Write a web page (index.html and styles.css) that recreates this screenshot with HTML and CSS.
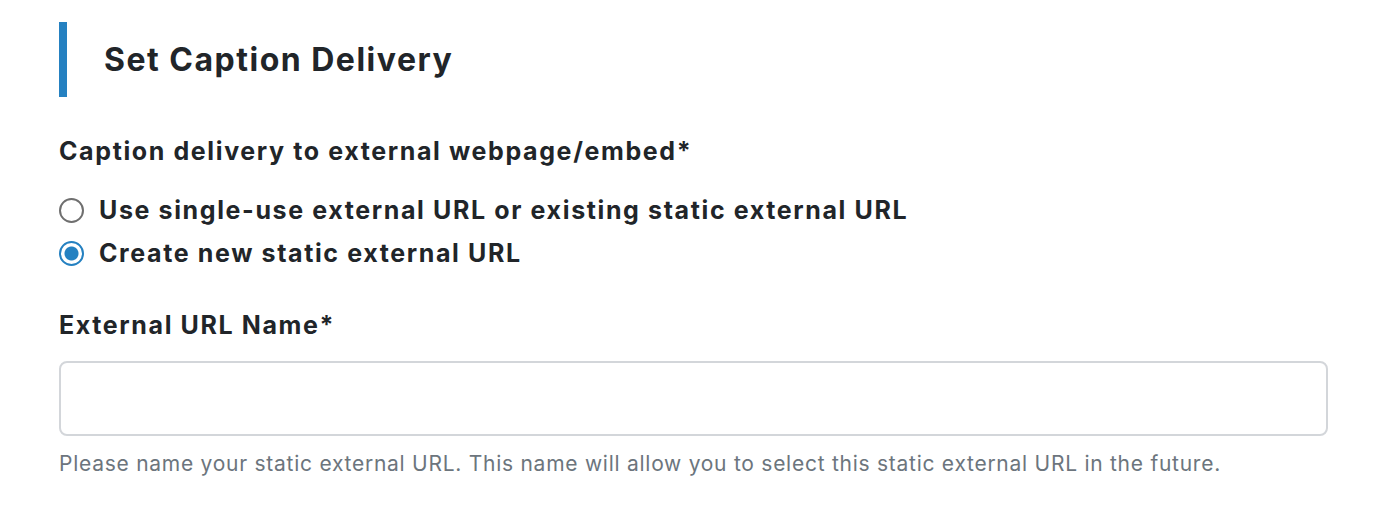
FILE: index.html
```html
<!DOCTYPE html>
<html lang="en">
<head>
<meta charset="utf-8">
<link rel="stylesheet" href="styles.css">
<title>Set Caption Delivery</title>
</head>
<body>
<div class="page">
  <div class="section-title">
    <h2 class="title">Set Caption Delivery</h2>
  </div>
  <div class="group">
    <div class="group-label">Caption delivery to external webpage/embed*</div>
    <div class="radios">
      <label class="radio-row"><span class="radio"></span><span>Use single-use external URL or existing static external URL</span></label>
      <label class="radio-row"><span class="radio checked"></span><span>Create new static external URL</span></label>
    </div>
  </div>
  <div class="field">
    <div class="field-label">External URL Name*</div>
    <div class="input"></div>
    <div class="help">Please name your static external URL. This name will allow you to select this static external URL in the future.</div>
  </div>
</div>
</body>
</html>
```
FILE: styles.css
```css
html, body {
  margin: 0;
  padding: 0;
  background: #ffffff;
}
body {
  font-family: Inter, "Noto Sans", "Liberation Sans", sans-serif;
  color: #212529;
}
.page {
  padding: 22px 46px 0 59px;
  display: flex;
  flex-direction: column;
}
.section-title {
  border-left: 8px solid #2581c1;
  height: 75px;
  display: flex;
  align-items: center;
  padding-left: 37px;
}
.title {
  margin: 0;
  font-size: 32px;
  font-weight: 700;
  letter-spacing: 1.5px;
}
.group {
  margin-top: 38px;
  display: flex;
  flex-direction: column;
}
.group-label, .field-label {
  font-size: 25px;
  font-weight: 700;
  line-height: 32px;
  letter-spacing: 1.62px;
}
.radios {
  margin-top: 27px;
  display: flex;
  flex-direction: column;
  gap: 11px;
}
.radio-row {
  display: flex;
  align-items: center;
  gap: 15px;
  font-size: 25px;
  font-weight: 700;
  line-height: 32px;
  letter-spacing: 1.62px;
}
.radio {
  width: 25px;
  height: 25px;
  box-sizing: border-box;
  border: 2px solid #6f6f6f;
  border-radius: 50%;
  flex: none;
}
.radio.checked {
  border-color: #2581c1;
  background: radial-gradient(circle, #2581c1 0 6.5px, #fff 7.5px);
}
.field {
  margin-top: 40px;
  display: flex;
  flex-direction: column;
}
.input {
  margin-top: 20px;
  height: 75px;
  box-sizing: border-box;
  border: 2px solid #d3d6da;
  border-radius: 8px;
}
.help {
  margin-top: 14px;
  font-size: 21px;
  color: #6c757d;
  line-height: 28px;
  letter-spacing: 0.74px;
}
```
